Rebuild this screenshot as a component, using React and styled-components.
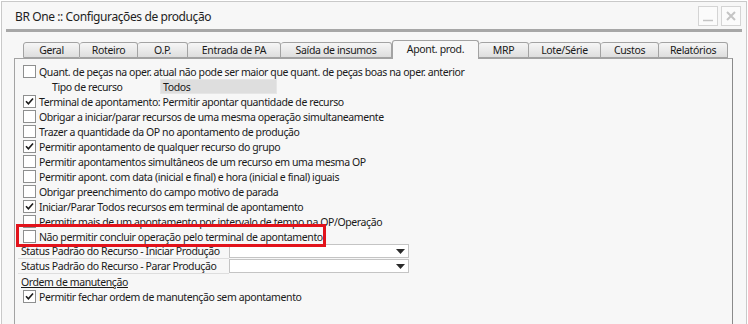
import React from "react";
import styled, { createGlobalStyle } from "styled-components";

const GlobalStyle = createGlobalStyle`
  html, body {
    margin: 0;
    padding: 0;
    background: #ffffff;
    overflow: hidden;
  }
  body {
    font-family: "Noto Sans", "Open Sans", sans-serif;
    color: #1a1a1a;
  }
`;

const Window = styled.div`
  margin: 1px 0 0 1px;
  width: 744px;
  height: 330px;
  border: 1px solid #c9c9c9;
  background: #f7f7f7;
  display: flex;
  flex-direction: column;
`;

const TitleBar = styled.div`
  height: 27px;
  margin: 0 4px 0 4px;
  border-bottom: 3px solid #a7a7a7;
  display: flex;
  align-items: center;
  justify-content: space-between;
  padding-left: 9px;
`;

const Title = styled.div`
  font-size: 12px;
  letter-spacing: -0.4px;
  color: #1e1e1e;
  padding-top: 2px;
`;

const WinButtons = styled.div`
  display: flex;
  gap: 3px;
  padding-right: 1px;
`;

const WinButton = styled.div`
  width: 18px;
  height: 18px;
  border: 1px solid #d4d4d4;
  background: #fbfbfb;
  display: flex;
  align-items: center;
  justify-content: center;
`;

const Body = styled.div`
  flex: 1;
  padding: 8px 10px 0 12px;
  display: flex;
  flex-direction: column;
`;

const TabRow = styled.div`
  display: flex;
  align-items: flex-end;
  height: 18px;
  padding-left: 9px;
  position: relative;
  z-index: 1;
`;

const Tab = styled.div`
  width: ${(p) => p.$w}px;
  height: ${(p) => (p.$active ? 19 : 16)}px;
  box-sizing: border-box;
  border: 1px solid #a3a3a3;
  border-bottom: ${(p) => (p.$active ? "none" : "1px solid #a3a3a3")};
  border-left: ${(p) => (p.$first || p.$active ? "1px solid #a3a3a3" : "none")};
  border-radius: 3px 3px 0 0;
  background: ${(p) =>
    p.$active ? "#f7f7f7" : "linear-gradient(#f6f6f6, #dedede)"};
  font-size: 10.5px;
  letter-spacing: -0.35px;
  display: flex;
  align-items: center;
  justify-content: center;
  margin-bottom: ${(p) => (p.$active ? "-1px" : "0")};
  padding-bottom: ${(p) => (p.$active ? "2px" : "0")};
  color: #1a1a1a;
`;

const Panel = styled.div`
  flex: 1;
  border: 1px solid #a3a3a3;
  border-right-color: #8a8a8a;
  background: #f7f7f7;
  padding: 5px 8px 0 8px;
  width: 719px;
  box-sizing: border-box;
  display: flex;
  flex-direction: column;
  font-size: 10.5px;
  letter-spacing: -0.4px;
`;

const Row = styled.div`
  height: 15px;
  display: flex;
  align-items: center;
  gap: 3px;
  white-space: nowrap;
  position: relative;
  padding-left: ${(p) => p.$indent || 0}px;

  ${(p) =>
    p.$highlight &&
    `
    &::after {
      content: "";
      position: absolute;
      left: -7px;
      top: -5px;
      width: 304px;
      height: 17px;
      border: 3px solid #e2131b;
    }
  `}
`;

const Box = styled.span`
  width: 13px;
  height: 13px;
  box-sizing: border-box;
  border: 1px solid #8e8f8f;
  background: #ffffff;
  display: inline-flex;
  align-items: center;
  justify-content: center;
  flex-shrink: 0;
`;

const Label = styled.span`
  width: ${(p) => p.$w}px;
  box-sizing: border-box;
  flex-shrink: 0;
`;

const ReadOnlyField = styled.div`
  width: 113px;
  height: 13px;
  background: #dedede;
  border: 1px solid #e6e6e6;
  padding-left: 2px;
  display: flex;
  align-items: center;
`;

const StatusRow = styled.div`
  height: 15px;
  display: flex;
  align-items: stretch;
  white-space: nowrap;
  margin-left: -5px;
`;

const StatusLabel = styled.div`
  width: 211px;
  border-bottom: 1px solid #dedede;
  padding-left: 3px;
  display: flex;
  align-items: center;
  box-sizing: border-box;
`;

const Select = styled.div`
  width: 180px;
  height: 14px;
  box-sizing: border-box;
  border: 1px solid #c4c4c4;
  background: #ffffff;
  display: flex;
  align-items: center;
  justify-content: flex-end;
  padding-right: 3px;
`;

const SectionTitle = styled.div`
  height: 15px;
  text-decoration: underline;
  display: flex;
  align-items: center;
  margin-left: -2px;
`;

const Check = ({ on }) => (
  <Box>
    {on && (
      <svg width="11" height="11" viewBox="0 0 11 11">
        <path d="M2 5.2 L4.4 7.8 L9 2.4" fill="none" stroke="#1b1b1b" strokeWidth="1.6" />
      </svg>
    )}
  </Box>
);

const Arrow = () => (
  <svg width="9" height="5" viewBox="0 0 9 5">
    <path d="M0 0 H9 L4.5 5 Z" fill="#2a2a2a" />
  </svg>
);

const tabs = [
  ["Geral", 57],
  ["Roteiro", 58],
  ["O.P.", 50],
  ["Entrada de PA", 93],
  ["Saída de insumos", 111],
  ["Apont. prod.", 87],
  ["MRP", 50],
  ["Lote/Série", 72],
  ["Custos", 58],
  ["Relatórios", 69],
];

const options = [
  [false, "Terminal de apontamento: Permitir apontar quantidade de recurso", true],
  [false, "Obrigar a iniciar/parar recursos de uma mesma operação simultaneamente"],
  [false, "Trazer a quantidade da OP no apontamento de produção"],
  [false, "Permitir apontamento de qualquer recurso do grupo", true],
  [false, "Permitir apontamentos simultâneos de um recurso em uma mesma OP"],
  [false, "Permitir apont. com data (inicial e final) e hora (inicial e final) iguais"],
  [false, "Obrigar preenchimento do campo motivo de parada"],
  [false, "Iniciar/Parar Todos recursos em terminal de apontamento", true],
  [false, "Permitir mais de um apontamento por intervalo de tempo na OP/Operação"],
  [true, "Não permitir concluir operação pelo terminal de apontamento"],
];

const App = () => {
  return (
    <>
      <GlobalStyle />
      <Window>
        <TitleBar>
          <Title>BR One :: Configurações de produção</Title>
          <WinButtons>
            <WinButton>
              <svg width="12" height="12" viewBox="0 0 12 12">
                <path d="M1 10.5 H11" stroke="#c4c4c4" strokeWidth="1.5" />
              </svg>
            </WinButton>
            <WinButton>
              <svg width="12" height="12" viewBox="0 0 12 12">
                <path d="M2 2 L10 10 M10 2 L2 10" stroke="#c4c4c4" strokeWidth="2" />
              </svg>
            </WinButton>
          </WinButtons>
        </TitleBar>
        <Body>
          <TabRow>
            {tabs.map(([name, w], i) => (
              <Tab key={name} $w={w} $first={i === 0} $active={name === "Apont. prod."}>
                {name}
              </Tab>
            ))}
          </TabRow>
          <Panel>
            <Row>
              <Check />
              Quant. de peças na oper. atual não pode ser maior que quant. de peças boas na oper. anterior
            </Row>
            <Row $indent={29}>
              <Label $w={105}>Tipo de recurso</Label>
              <ReadOnlyField>Todos</ReadOnlyField>
            </Row>
            {options.map(([hl, text, on]) => (
              <Row key={text} $highlight={hl}>
                <Check on={on} />
                {text}
              </Row>
            ))}
            <StatusRow>
              <StatusLabel>Status Padrão do Recurso - Iniciar Produção</StatusLabel>
              <Select>
                <Arrow />
              </Select>
            </StatusRow>
            <StatusRow>
              <StatusLabel>Status Padrão do Recurso - Parar Produção</StatusLabel>
              <Select>
                <Arrow />
              </Select>
            </StatusRow>
            <SectionTitle>Ordem de manutenção</SectionTitle>
            <Row>
              <Check on />
              Permitir fechar ordem de manutenção sem apontamento
            </Row>
          </Panel>
        </Body>
      </Window>
    </>
  );
};

export default App;
